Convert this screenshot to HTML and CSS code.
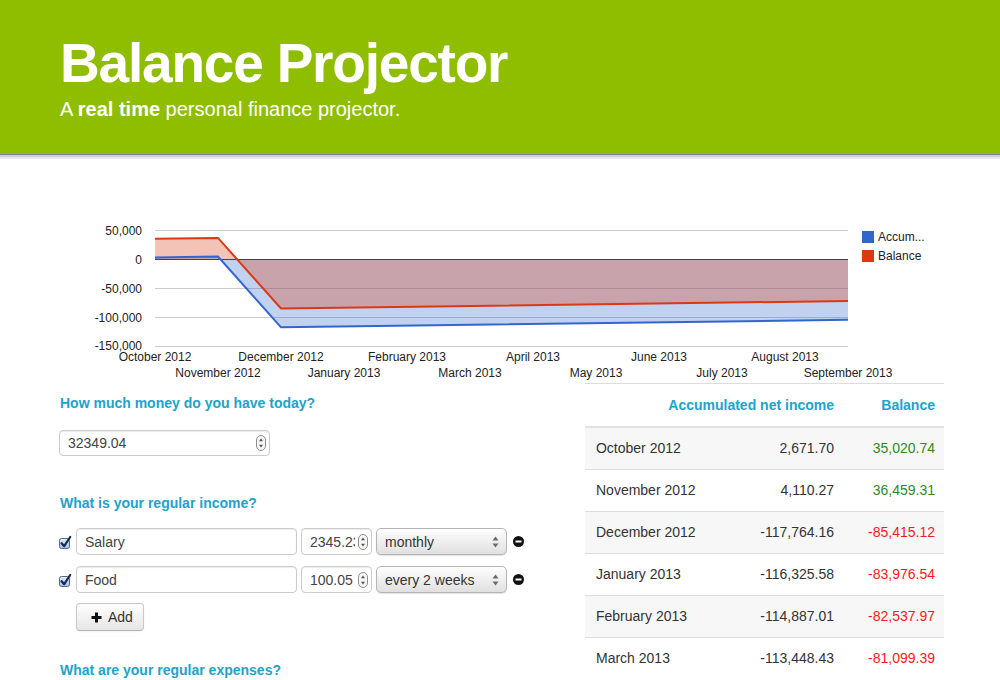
FILE: index.html
```html
<!DOCTYPE html>
<html lang="en">
<head>
<meta charset="utf-8">
<title>Balance Projector</title>
<link rel="stylesheet" href="styles.css">
</head>
<body>
<header class="hero">
  <h1 class="hero-title">Balance Projector</h1>
  <p class="hero-sub">A <strong>real time</strong> personal finance projector.</p>
</header>

<main class="main">
  <svg class="chart" width="884" height="183" viewBox="0 0 884 183">
    <g class="grid">
      <line x1="95" y1="30.5" x2="788" y2="30.5"/>
      <line x1="95" y1="88.5" x2="788" y2="88.5"/>
      <line x1="95" y1="117.5" x2="788" y2="117.5"/>
      <line x1="95" y1="146.5" x2="788" y2="146.5"/>
    </g>
    <path class="area-acc" d="M95,59 L95,57.4 L158,56.6 L221,127.3 L788,119.8 L788,59 Z"/>
    <path class="area-bal" d="M95,59 L95,38.7 L158,37.9 L221,108.5 L788,101 L788,59 Z"/>
    <line class="baseline" x1="95" y1="59.5" x2="788" y2="59.5"/>
    <path class="line-acc" d="M95,57.4 L158,56.6 L221,127.3 L788,119.8"/>
    <path class="line-bal" d="M95,38.7 L158,37.9 L221,108.5 L788,101"/>
    <g class="axis-y">
      <text x="82" y="35">50,000</text>
      <text x="82" y="64">0</text>
      <text x="82" y="93">-50,000</text>
      <text x="82" y="122">-100,000</text>
      <text x="82" y="150">-150,000</text>
    </g>
    <g class="axis-x">
      <text x="95" y="161">October 2012</text>
      <text x="221" y="161">December 2012</text>
      <text x="347" y="161">February 2013</text>
      <text x="473" y="161">April 2013</text>
      <text x="599" y="161">June 2013</text>
      <text x="725" y="161">August 2013</text>
      <text x="158" y="177">November 2012</text>
      <text x="284" y="177">January 2013</text>
      <text x="410" y="177">March 2013</text>
      <text x="536" y="177">May 2013</text>
      <text x="662" y="177">July 2013</text>
      <text x="788" y="177">September 2013</text>
    </g>
    <g class="legend">
      <rect x="802" y="31" width="12" height="12" fill="#3366cc"/>
      <text x="818" y="41">Accum...</text>
      <rect x="802" y="50" width="12" height="12" fill="#dc3912"/>
      <text x="818" y="60">Balance</text>
    </g>
  </svg>

  <div class="columns">
    <section class="form">
      <h4 class="q">How much money do you have today?</h4>
      <div class="field field-today">
        <input class="field-input" type="text" value="32349.04">
        <svg class="spin" width="10" height="16" viewBox="0 0 10 16"><rect x="0.5" y="0.5" width="9" height="15" rx="4.5" fill="#f6f6f6" stroke="#8e8e8e"/><path d="M5,3.5 L7,6.2 L3,6.2 Z M5,12.5 L7,9.8 L3,9.8 Z" fill="#555"/></svg>
      </div>

      <h4 class="q q-income">What is your regular income?</h4>

      <div class="item-row">
        <svg class="check" width="14" height="14" viewBox="0 0 14 14"><defs><linearGradient id="cb" x1="0" y1="0" x2="0" y2="1"><stop offset="0" stop-color="#e4eefb"/><stop offset="1" stop-color="#9fc0ea"/></linearGradient></defs><rect x="1.5" y="3.5" width="10" height="10" rx="2" fill="url(#cb)" stroke="#56698a"/><path d="M3.6,8.2 L6.2,11.2 L12.2,2" fill="none" stroke="#1c2949" stroke-width="2.2" stroke-linecap="round" stroke-linejoin="round"/></svg>
        <div class="field field-name"><input class="field-input" type="text" value="Salary"></div>
        <div class="field field-amount">
          <input class="field-input" type="text" value="2345.23">
          <svg class="spin" width="10" height="16" viewBox="0 0 10 16"><rect x="0.5" y="0.5" width="9" height="15" rx="4.5" fill="#f6f6f6" stroke="#8e8e8e"/><path d="M5,3.5 L7,6.2 L3,6.2 Z M5,12.5 L7,9.8 L3,9.8 Z" fill="#555"/></svg>
        </div>
        <div class="select">
          <span class="select-text">monthly</span>
          <svg class="select-arrows" width="7" height="12" viewBox="0 0 7 12"><path d="M3.5,0.5 L6.5,4.5 L0.5,4.5 Z M3.5,11.5 L6.5,7.5 L0.5,7.5 Z" fill="#6a6a6a"/></svg>
        </div>
        <svg class="remove" width="11" height="11" viewBox="0 0 11 11"><circle cx="5.5" cy="5.5" r="5.5" fill="#111"/><rect x="2.5" y="4.5" width="6" height="2" fill="#fff"/></svg>
      </div>

      <div class="item-row">
        <svg class="check" width="14" height="14" viewBox="0 0 14 14"><rect x="1.5" y="3.5" width="10" height="10" rx="2" fill="url(#cb)" stroke="#56698a"/><path d="M3.6,8.2 L6.2,11.2 L12.2,2" fill="none" stroke="#1c2949" stroke-width="2.2" stroke-linecap="round" stroke-linejoin="round"/></svg>
        <div class="field field-name"><input class="field-input" type="text" value="Food"></div>
        <div class="field field-amount">
          <input class="field-input" type="text" value="100.05">
          <svg class="spin" width="10" height="16" viewBox="0 0 10 16"><rect x="0.5" y="0.5" width="9" height="15" rx="4.5" fill="#f6f6f6" stroke="#8e8e8e"/><path d="M5,3.5 L7,6.2 L3,6.2 Z M5,12.5 L7,9.8 L3,9.8 Z" fill="#555"/></svg>
        </div>
        <div class="select">
          <span class="select-text">every 2 weeks</span>
          <svg class="select-arrows" width="7" height="12" viewBox="0 0 7 12"><path d="M3.5,0.5 L6.5,4.5 L0.5,4.5 Z M3.5,11.5 L6.5,7.5 L0.5,7.5 Z" fill="#6a6a6a"/></svg>
        </div>
        <svg class="remove" width="11" height="11" viewBox="0 0 11 11"><circle cx="5.5" cy="5.5" r="5.5" fill="#111"/><rect x="2.5" y="4.5" width="6" height="2" fill="#fff"/></svg>
      </div>

      <button class="btn" type="button"><svg class="plus" width="11" height="11" viewBox="0 0 11 11"><path d="M4,0.5 H7 V4 H10.5 V7 H7 V10.5 H4 V7 H0.5 V4 H4 Z" fill="#111"/></svg>Add</button>

      <h4 class="q q-expenses">What are your regular expenses?</h4>
    </section>

    <table class="proj">
      <colgroup><col class="c-month"><col class="c-acc"><col class="c-bal"></colgroup>
      <thead>
        <tr><th colspan="2">Accumulated net income</th><th>Balance</th></tr>
      </thead>
      <tbody>
        <tr><td>October 2012</td><td class="num">2,671.70</td><td class="num pos">35,020.74</td></tr>
        <tr><td>November 2012</td><td class="num">4,110.27</td><td class="num pos">36,459.31</td></tr>
        <tr><td>December 2012</td><td class="num">-117,764.16</td><td class="num neg">-85,415.12</td></tr>
        <tr><td>January 2013</td><td class="num">-116,325.58</td><td class="num neg">-83,976.54</td></tr>
        <tr><td>February 2013</td><td class="num">-114,887.01</td><td class="num neg">-82,537.97</td></tr>
        <tr><td>March 2013</td><td class="num">-113,448.43</td><td class="num neg">-81,099.39</td></tr>
      </tbody>
    </table>
  </div>
</main>
</body>
</html>
```

FILE: styles.css
```css
html, body {
  margin: 0;
  padding: 0;
  overflow: hidden;
}

body {
  font-family: "Liberation Sans", Arial, Helvetica, sans-serif;
  font-size: 14px;
  color: #333;
  background: #fff;
}

/* ---------- header ---------- */
.hero {
  background: #8fbe00;
  height: 155px;
  box-sizing: border-box;
  padding: 36px 60px 0;
  border-bottom: 1px solid #7f8398;
  box-shadow: 0 2px 0 #cfcfcf, 0 4px 0 #e8e8e8;
}

.hero-title {
  margin: 0;
  font-size: 55px;
  line-height: 55px;
  font-weight: bold;
  letter-spacing: -1.2px;
  color: #fff;
}

.hero-sub {
  margin: 6px 0 0;
  font-size: 20px;
  line-height: 24px;
  color: #fff;
}

.hero-sub strong {
  font-weight: bold;
}

/* ---------- main ---------- */
.main {
  width: 884px;
  padding: 0 56px 0 60px;
  margin-top: 45px;
}

.chart {
  display: block;
  font-family: "Liberation Sans", Arial, sans-serif;
}

.grid line {
  stroke: #cccccc;
  stroke-width: 1;
}

.baseline {
  stroke: #444;
  stroke-width: 1;
}

.area-acc {
  fill: #3366cc;
  fill-opacity: 0.3;
}

.area-bal {
  fill: #dc3912;
  fill-opacity: 0.3;
}

.line-acc {
  fill: none;
  stroke: #3366cc;
  stroke-width: 2;
}

.line-bal {
  fill: none;
  stroke: #dc3912;
  stroke-width: 2;
}

.axis-y text {
  font-size: 12px;
  fill: #222;
  text-anchor: end;
}

.axis-x text {
  font-size: 12px;
  fill: #222;
  text-anchor: middle;
}

.legend text {
  font-size: 12px;
  fill: #222;
}

.columns {
  display: flex;
  justify-content: space-between;
  align-items: flex-start;
}

/* ---------- form ---------- */
.form {
  width: 480px;
  padding-top: 10px;
}

.q {
  margin: 0;
  font-size: 14px;
  line-height: 20px;
  font-weight: bold;
  color: #20a3cb;
}

.q-income {
  margin-top: 37px;
}

.q-expenses {
  margin-top: 29px;
}

.field {
  display: flex;
  align-items: center;
  box-sizing: border-box;
  height: 27px;
  padding: 0 3px 0 8px;
  border: 1px solid #cccccc;
  border-radius: 4px;
  background: #fff;
  box-shadow: inset 0 1px 1px rgba(0, 0, 0, 0.08);
}

.field-input {
  flex: 1;
  min-width: 0;
  border: 0;
  outline: none;
  padding: 0;
  margin: 0;
  background: transparent;
  font-family: "Liberation Sans", Arial, sans-serif;
  font-size: 14px;
  color: #444;
}

.field-today {
  width: 211px;
  height: 26px;
  margin-top: 17px;
  margin-left: -1px;
}

.spin {
  flex: none;
  margin-left: 3px;
}

.item-row {
  display: flex;
  align-items: center;
  margin-left: -2px;
  margin-top: 11px;
}

.q-income + .item-row {
  margin-top: 15px;
}

.check {
  flex: none;
  margin-right: 4px;
  margin-top: 1px;
}

.field-name {
  width: 221px;
}

.field-amount {
  width: 71px;
  margin-left: 4px;
}

.select {
  display: flex;
  align-items: center;
  box-sizing: border-box;
  width: 131px;
  height: 27px;
  margin-left: 4px;
  padding: 0 7px 0 8px;
  border: 1px solid #b4b4b4;
  border-radius: 5px;
  background: linear-gradient(#fefefe, #e0e0e0);
  box-shadow: 0 1px 1px rgba(0, 0, 0, 0.12);
}

.select-text {
  flex: 1;
  font-size: 14px;
  color: #333;
}

.select-arrows {
  flex: none;
}

.remove {
  flex: none;
  margin-left: 6px;
}

.btn {
  display: flex;
  align-items: center;
  box-sizing: border-box;
  width: 68px;
  height: 28px;
  margin: 10px 0 0 16px;
  padding: 0 0 0 14px;
  border: 1px solid #c8c8c8;
  border-bottom-color: #b3b3b3;
  border-radius: 4px;
  background: linear-gradient(#ffffff, #e6e6e6);
  box-shadow: inset 0 1px 0 rgba(255, 255, 255, 0.2), 0 1px 2px rgba(0, 0, 0, 0.05);
  font-family: "Liberation Sans", Arial, sans-serif;
  font-size: 14px;
  color: #333;
}

.plus {
  margin-right: 6px;
}

/* ---------- table ---------- */
.proj {
  width: 359px;
  table-layout: fixed;
  border-collapse: collapse;
  font-size: 14px;
}

.c-month { width: 125px; }
.c-acc { width: 133px; }
.c-bal { width: 101px; }

.proj th {
  text-align: right;
  font-weight: bold;
  color: #20a3cb;
  line-height: 20px;
  padding: 11px 9px 11px 10px;
  border-top: 1px solid #dddddd;
  border-bottom: 2px solid #e2e2e2;
  white-space: nowrap;
}

.proj td {
  line-height: 21px;
  padding: 10px 9px 10px 11px;
  border-top: 1px solid #dddddd;
  color: #333;
  white-space: nowrap;
}

.proj tbody tr:nth-child(odd) td {
  background: #f7f7f7;
}

.proj .num {
  text-align: right;
}

.proj .pos {
  color: #2f8a1c;
}

.proj .neg {
  color: #f51b1b;
}
```
